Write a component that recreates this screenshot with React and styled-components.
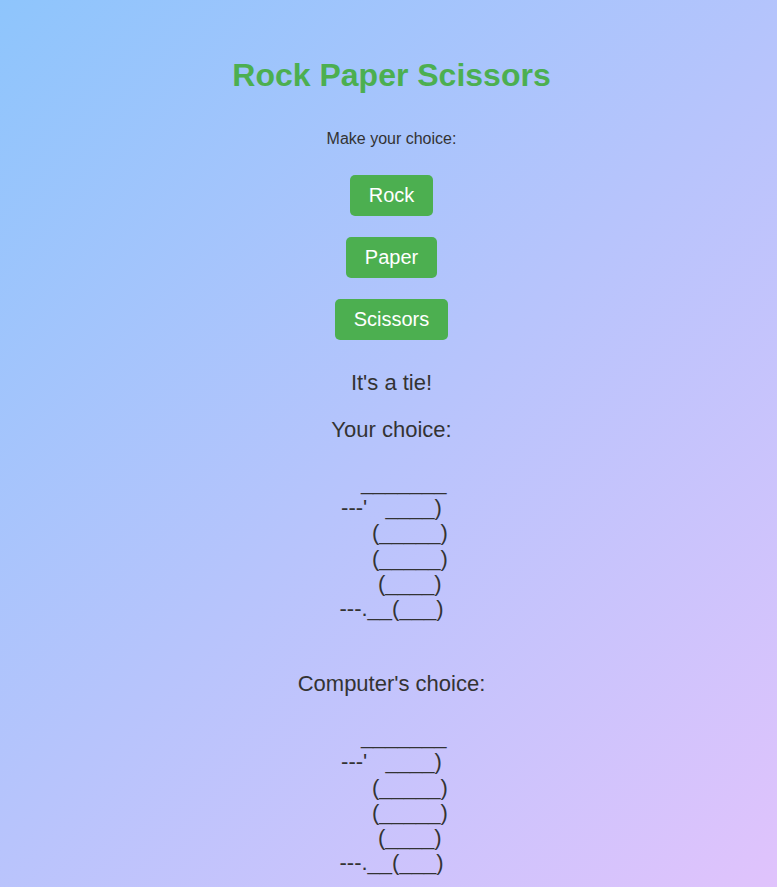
import React, { useState } from "react"
import styled, { createGlobalStyle } from "styled-components"

const GlobalStyle = createGlobalStyle`
	html {
		min-height: 100%;
		background: linear-gradient(135deg, #8ec5fc 0%, #e0c3fc 100%);
	}
	body {
		margin: 0;
		font-family: "Liberation Sans", Arial, sans-serif;
		color: #333;
	}
`

const ART = {
	rock: `    _______
---'   ____)
      (_____)
      (_____)
      (____)
---.__(___)`,
	paper: `    _______
---'   ____)____
          ______)
          _______)
         _______)
---.__________)`,
	scissors: `    _______
---'   ____)____
          ______)
       __________)
      (____)
---.__(___)`,
}

const CHOICES = [
	{ id: "rock", label: "Rock" },
	{ id: "paper", label: "Paper" },
	{ id: "scissors", label: "Scissors" },
]

const BEATS = { rock: "scissors", paper: "rock", scissors: "paper" }

const Page = styled.div`
	display: flex;
	flex-direction: column;
	align-items: center;
	text-align: center;
	padding: 57px 0 10px 6px;
`

const Title = styled.h1`
	margin: 0 0 36px;
	font-size: 32px;
	font-weight: bold;
	color: #4caf50;
`

const Prompt = styled.p`
	margin: 0 0 27px;
	font-size: 16px;
`

const ChoiceList = styled.div`
	display: flex;
	flex-direction: column;
	align-items: center;
	gap: 21px;
	margin-bottom: 30px;
`

const ChoiceButton = styled.button`
	padding: 9px 19px;
	border: none;
	border-radius: 5px;
	background-color: #4caf50;
	color: white;
	font-family: inherit;
	font-size: 20px;
	cursor: pointer;
	&:hover {
		background-color: #45a049;
	}
`

const Result = styled.div`
	font-size: 22px;
	margin-bottom: 21px;
`

const Label = styled.div`
	font-size: 22px;
	margin-top: ${(props) => (props.$after ? "50px" : "0")};
	margin-bottom: 27px;
`

const Art = styled.pre`
	margin: 0;
	font-family: inherit;
	font-size: 22px;
	line-height: 25.2px;
	text-align: center;
`

function App() {
	const [player, setPlayer] = useState("rock")
	const [computer, setComputer] = useState("rock")

	const play = (choice) => {
		const pick = CHOICES[Math.floor(Math.random() * CHOICES.length)].id
		setPlayer(choice)
		setComputer(pick)
	}

	let result = "It's a tie!"
	if (BEATS[player] === computer) result = "You win!"
	else if (player !== computer) result = "You lose!"

	return (
		<>
			<GlobalStyle />
			<Page>
				<Title>Rock Paper Scissors</Title>
				<Prompt>Make your choice:</Prompt>
				<ChoiceList>
					{CHOICES.map((choice) => (
						<ChoiceButton key={choice.id} onClick={() => play(choice.id)}>
							{choice.label}
						</ChoiceButton>
					))}
				</ChoiceList>
				<Result>{result}</Result>
				<Label>Your choice:</Label>
				<Art>{ART[player]}</Art>
				<Label $after>Computer's choice:</Label>
				<Art>{ART[computer]}</Art>
			</Page>
		</>
	)
}

export default App
